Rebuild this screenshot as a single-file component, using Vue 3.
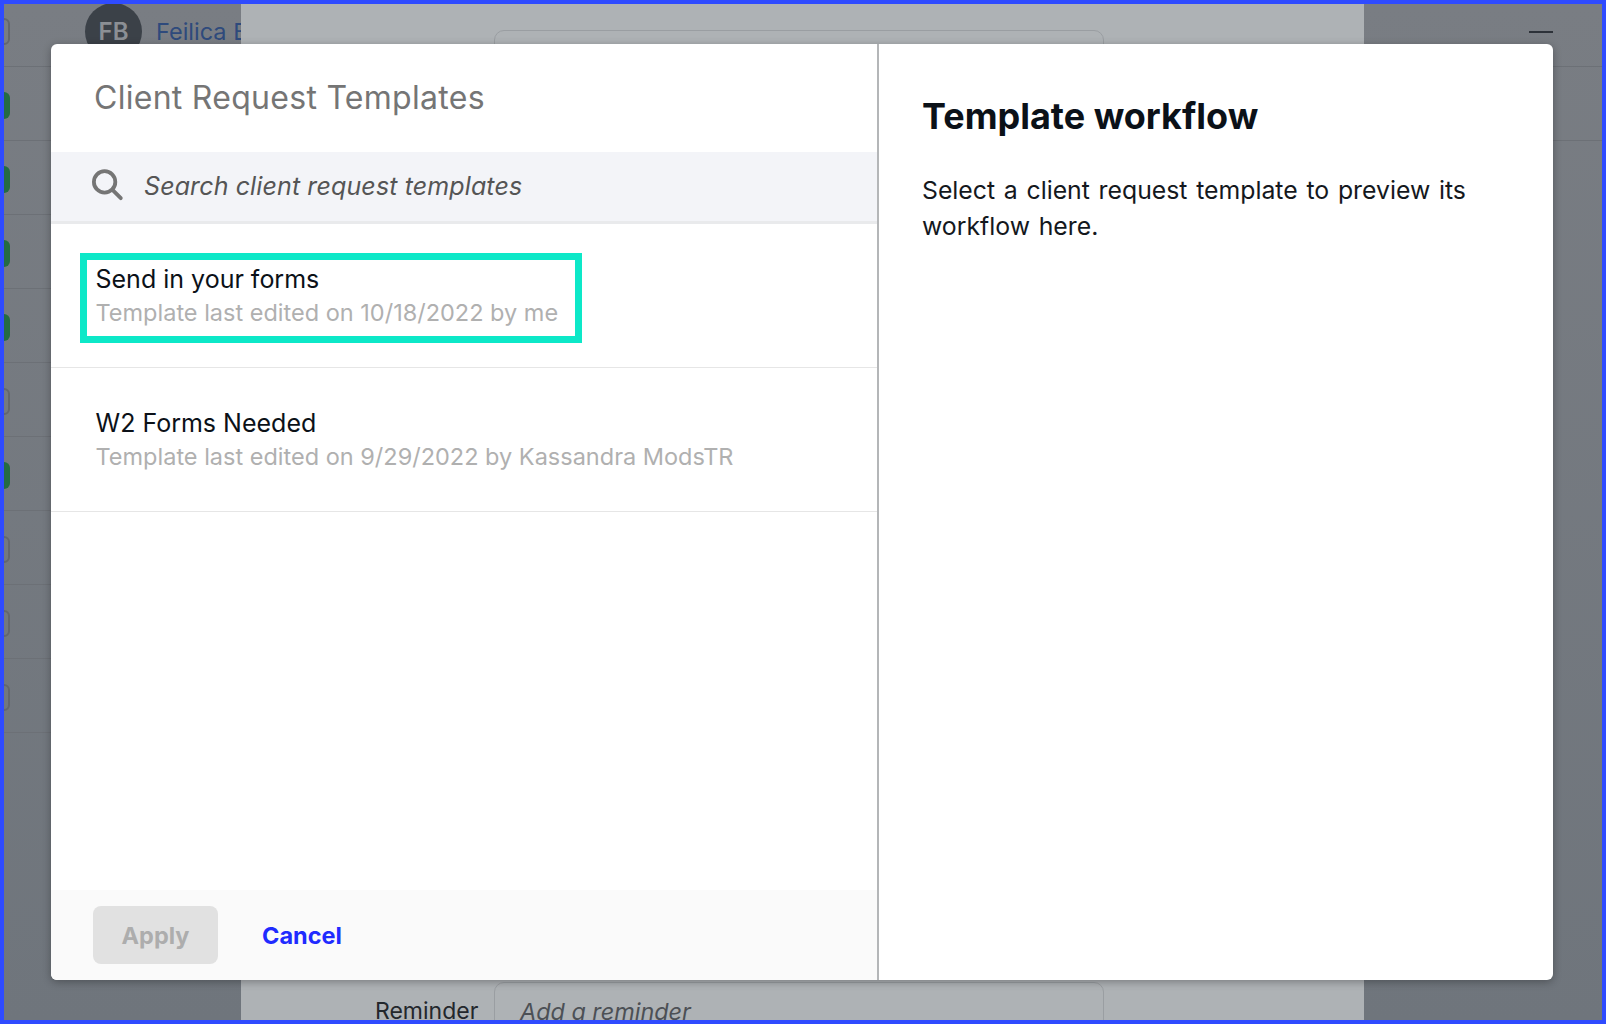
<script setup>
const rows = [
  { kind: 'outline' }, { kind: 'green' }, { kind: 'green' }, { kind: 'green' }, { kind: 'green' },
  { kind: 'outline' }, { kind: 'green' }, { kind: 'outline' }, { kind: 'outline' }, { kind: 'outline' },
]
const templates = [
  { name: 'Send in your forms', meta: 'Template last edited on 10/18/2022 by me', marked: true },
  { name: 'W2 Forms Needed', meta: 'Template last edited on 9/29/2022 by Kassandra ModsTR', marked: false },
]
</script>

<template>
  <div class="frame">
    <div class="page">
      <div class="list">
        <div v-for="(r, i) in rows" :key="i" class="list-row">
          <span class="chip" :class="r.kind"></span>
          <template v-if="i === 0">
            <span class="avatar">FB</span>
            <span class="person">Feilica B</span>
          </template>
        </div>
      </div>
      <div class="sheet">
        <div class="field field-top"></div>
        <div class="reminder">
          <span class="reminder-label">Reminder</span>
          <div class="field field-bottom">Add a reminder</div>
        </div>
      </div>
      <div class="aside">
        <span class="dash"></span>
        <div class="aside-line"></div>
        <div class="aside-line"></div>
      </div>

      <div class="modal">
        <section class="picker">
          <h2 class="picker-title">Client Request Templates</h2>
          <div class="search">
            <svg class="search-icon" width="34" height="34" viewBox="0 0 34 34" fill="none" stroke="#757575" stroke-width="3.8" stroke-linecap="round">
              <circle cx="14.6" cy="14.9" r="10.7" />
              <path d="M23 23.3 L30.8 31.2" />
            </svg>
            <span class="search-text">Search client request templates</span>
          </div>
          <ul class="templates">
            <li v-for="t in templates" :key="t.name" class="template">
              <div class="template-body" :class="{ marked: t.marked }">
                <div class="template-name">{{ t.name }}</div>
                <div class="template-meta">{{ t.meta }}</div>
              </div>
            </li>
          </ul>
          <div class="actions">
            <button class="apply" type="button">Apply</button>
            <button class="cancel" type="button">Cancel</button>
          </div>
        </section>
        <section class="preview">
          <h2 class="preview-title">Template workflow</h2>
          <p class="preview-text">Select a client request template to preview its workflow here.</p>
        </section>
      </div>
    </div>
  </div>
</template>

<style>
html, body { margin: 0; padding: 0; background: #767b81; }
</style>

<style scoped>
.frame {
  width: 1606px;
  height: 1024px;
  box-sizing: border-box;
  border: 4px solid #2f4bff;
  overflow: hidden;
  font-family: Inter, "Liberation Sans", sans-serif;
}
.page {
  position: relative;
  display: flex;
  height: 1016px;
  background: linear-gradient(#797d83, #6f757c);
  overflow: hidden;
}
.list {
  width: 237px;
  flex: none;
}
.list-row {
  height: 73px;
  border-bottom: 1px solid #6c7076;
  display: flex;
  align-items: center;
  box-sizing: content-box;
}
.list-row:first-child { height: 62px; }
.chip {
  width: 15px;
  height: 27px;
  margin-left: -9px;
  margin-top: 3px;
  border-radius: 6px;
  box-sizing: border-box;
  flex: none;
}
.list-row:first-child .chip { margin-top: -7px; }
.chip.outline { border: 2px solid #63676d; }
.chip.green { background: #256b43; }
.avatar {
  width: 57px;
  height: 57px;
  margin-left: 75px;
  margin-top: -7px;
  border-radius: 50%;
  background: #3b4148;
  color: #8b8f94;
  font-size: 24px;
  font-weight: 600;
  display: flex;
  align-items: center;
  justify-content: center;
  flex: none;
}
.person {
  margin-left: 14px;
  margin-top: -7px;
  font-size: 23.5px;
  color: #2e4a7c;
  white-space: nowrap;
}
.sheet {
  width: 1123px;
  flex: none;
  background: #aeb2b5;
  display: flex;
  flex-direction: column;
  justify-content: space-between;
  padding-top: 26px;
  box-sizing: border-box;
  z-index: 1;
}
.field {
  width: 610px;
  margin-left: 253px;
  box-sizing: border-box;
  border: 1px solid #9a9ea2;
  border-radius: 10px;
}
.field-top { height: 60px; }
.reminder {
  display: flex;
  align-items: flex-start;
  height: 38px;
  padding-left: 134px;
}
.reminder-label {
  width: 119px;
  font-size: 23px;
  line-height: 18px;
  padding-top: 20px;
  color: #23272c;
}
.field-bottom {
  margin-left: 0;
  height: 60px;
  padding: 21px 0 0 25px;
  font-size: 23.4px;
  font-style: italic;
  line-height: 16px;
  color: #4c5055;
}
.aside {
  flex: 1;
  position: relative;
  padding-top: 62px;
}
.dash {
  position: absolute;
  right: 49px;
  top: 27px;
  width: 24px;
  height: 2px;
  background: #2d3239;
}
.aside-line {
  height: 73px;
  border-top: 1px solid #6c7076;
}
.modal {
  position: absolute;
  left: 47px;
  top: 40px;
  width: 1502px;
  height: 936px;
  display: flex;
  background: #fff;
  border-radius: 6px;
  overflow: hidden;
  box-shadow: 0 2px 8px rgba(0, 0, 0, 0.3);
  z-index: 2;
}
.picker {
  width: 826px;
  flex: none;
  display: flex;
  flex-direction: column;
  border-right: 2px solid #b4b6b8;
  box-sizing: content-box;
}
.picker-title {
  margin: 0;
  height: 108px;
  padding: 33px 0 0 43px;
  box-sizing: border-box;
  font-size: 32px;
  line-height: 42px;
  font-weight: 400;
  letter-spacing: 0.28px;
  color: #757575;
}
.search {
  height: 69px;
  box-sizing: content-box;
  background: #f3f4f8;
  border-bottom: 3px solid #e9eaec;
  display: flex;
  align-items: center;
  padding-left: 39px;
  flex: none;
}
.search-icon { flex: none; margin-top: -5px; }
.search-text {
  margin-left: 20px;
  margin-top: -1px;
  font-size: 25px;
  font-style: italic;
  letter-spacing: 0.12px;
  color: #555;
}
.templates {
  list-style: none;
  margin: 0;
  padding: 0;
  flex: 1;
}
.template {
  height: 144px;
  padding: 29px 0 0 29px;
  box-sizing: border-box;
  border-bottom: 1px solid #e6e6e6;
}
.template-body {
  width: fit-content;
  padding: 2px 17px 6px 8.5px;
  border: 7px solid transparent;
}
.template-body.marked { border-color: #0de8c8; }
.template-name {
  font-size: 25px;
  line-height: 34px;
  color: #0b1118;
}
.template-meta {
  font-size: 23.5px;
  line-height: 34px;
  color: #b0b0b0;
}
.actions {
  height: 90px;
  flex: none;
  background: #fafafa;
  display: flex;
  align-items: center;
  padding-left: 42px;
  gap: 44px;
}
.apply {
  width: 125px;
  height: 58px;
  border: 0;
  border-radius: 8px;
  background: #e1e1e1;
  color: #adadad;
  font: 700 23.5px Inter, sans-serif;
  padding: 0;
}
.cancel {
  border: 0;
  background: none;
  padding: 0;
  color: #1f2bff;
  font: 700 23.5px Inter, sans-serif;
}
.preview {
  flex: 1;
  padding: 48px 60px 0 43px;
}
.preview-title {
  margin: 0;
  font-size: 36px;
  line-height: 48px;
  font-weight: 700;
  color: #0b1118;
}
.preview-text {
  margin: 32px 0 0;
  font-size: 24.8px;
  line-height: 36px;
  word-spacing: 1.75px;
  color: #14181d;
}
</style>
